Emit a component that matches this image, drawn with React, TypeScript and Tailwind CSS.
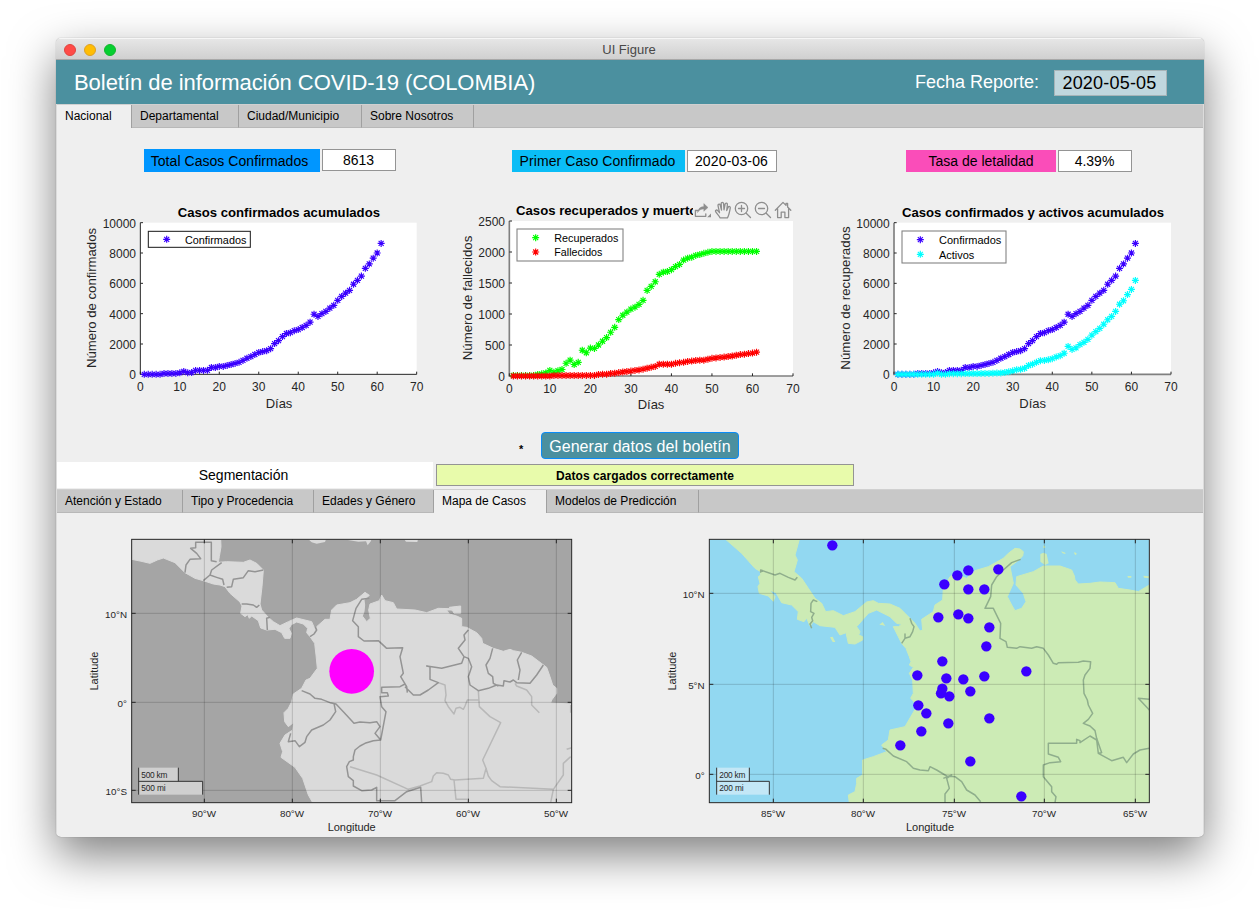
import React from "react";

type Series = { name: string; color: string; values: number[] };

const confirmed = [
  0, 0, 0, 0, 0, 55, 55, 55, 60, 100, 190, 110, 115, 260, 260, 260, 265, 450, 450, 520, 520, 590, 650, 720, 790, 920,
  1060, 1170, 1310, 1440, 1500, 1560, 1690, 2030, 2220, 2490, 2690, 2750, 2880, 2950, 3090, 3230, 3440, 3960, 3820,
  4000, 4150, 4360, 4550, 4880, 5140, 5350, 5540, 5940, 6200, 6480, 6990, 7280, 7660, 8000, 8630,
];
const active = [
  0, 0, 0, 0, 0, 0, 0, 0, 0, 0, 80, 0, 0, 45, 45, 45, 45, 50, 50, 50, 50, 55, 60, 60, 75, 85, 90, 120, 170, 230, 310,
  330, 400, 580, 670, 790, 900, 920, 960, 1030, 1150, 1230, 1390, 1840, 1640, 1750, 1960, 2110, 2310, 2580, 2820, 3030,
  3300, 3600, 3820, 4150, 4620, 4850, 5260, 5600, 6190,
];
const recovered = [
  8, 8, 8, 8, 8, 10, 25, 35, 50, 90, 60, 85, 105, 205, 255, 185, 220, 415, 375, 450, 445, 500, 560, 620, 705, 785, 910,
  980, 1030, 1080, 1110, 1155, 1220, 1380, 1445, 1520, 1640, 1675, 1685, 1715, 1765, 1800, 1870, 1900, 1915, 1945, 1960,
  1978, 1995, 2010, 2010, 2010, 2010, 2010, 2010, 2010, 2010, 2010, 2010, 2010, 2010,
];
const deaths = [
  0, 0, 0, 0, 0, 0, 0, 0, 0, 0, 8, 8, 8, 8, 8, 8, 8, 10, 10, 10, 10, 25, 28, 30, 40, 45, 55, 65, 72, 80, 90, 98, 110,
  125, 140, 155, 190, 190, 190, 190, 205, 215, 220, 235, 240, 250, 255, 255, 270, 285, 292, 300, 305, 315, 322, 335,
  345, 352, 362, 370, 385,
];

const FONT = "'Liberation Sans', Arial, Helvetica, sans-serif";

function Star({ x, y, color }: { x: number; y: number; color: string }) {
  return (
    <path
      d={`M${x - 10.5} ${y}h21M${x} ${y - 10.5}v21M${x - 7.5} ${y - 7.5}l15 15M${x - 7.5} ${y + 7.5}l15 -15`}
      stroke={color}
      strokeWidth="3.5"
      fill="none"
    />
  );
}

type ChartProps = {
  title: string;
  titleX: number;
  titleY: number;
  titleW: number;
  yLabel: string;
  yLabelX: number;
  yLabelMid: number;
  yLabelW: number;
  xLabelX: number;
  xLabelY: number;
  left: number;
  right: number;
  top: number;
  bottom: number;
  max: number;
  step: number;
  axis: string;
  series: Series[];
  legend: { x: number; y: number; w: number; h: number; mark: number; text: number; rows: number[]; widths: number[] };
};

function Chart(p: ChartProps) {
  const px = (d: number) => p.left + ((p.right - p.left) * d) / 70;
  const py = (v: number) => p.bottom - ((p.bottom - p.top) * v) / p.max;
  const yTicks: number[] = [];
  for (let v = 0; v <= p.max; v += p.step) yTicks.push(v);
  return (
    <svg className="h-[220px] w-[360px] shrink-0" viewBox="0 0 1080 660" fontFamily={FONT}>
      <rect x={p.left} y={p.top} width={p.right - p.left} height={p.bottom - p.top} fill="#fff" />
      <path
        d={`M${p.left} ${p.top}V${p.bottom}H${p.right}`}
        stroke={p.axis}
        strokeWidth={p.axis === "#262626" ? 3 : 5}
        fill="none"
      />
      {yTicks.map((v) => (
        <g key={v}>
          <path d={`M${p.left} ${py(v)}h8`} stroke="#262626" strokeWidth="3" />
          <text x={p.left - 13} y={py(v) + 15} fontSize="36" fill="#262626" textAnchor="end">
            {v}
          </text>
        </g>
      ))}
      {[0, 10, 20, 30, 40, 50, 60, 70].map((d) => (
        <g key={d}>
          <path d={`M${px(d)} ${p.bottom}v-8`} stroke="#262626" strokeWidth="3" />
          <text x={px(d)} y={p.bottom + 50} fontSize="36" fill="#262626" textAnchor="middle">
            {d}
          </text>
        </g>
      ))}
      {p.series.map((s) => s.values.map((v, i) => <Star key={s.name + i} x={px(i + 1)} y={py(v)} color={s.color} />))}
      <text x={p.titleX} y={p.titleY} fontSize="39" fontWeight="700" fill="#000" textLength={p.titleW} lengthAdjust="spacingAndGlyphs">
        {p.title}
      </text>
      <text
        transform={`translate(${p.yLabelX} ${p.yLabelMid}) rotate(-90)`}
        fontSize="39"
        fill="#262626"
        textAnchor="middle"
        textLength={p.yLabelW}
        lengthAdjust="spacingAndGlyphs"
      >
        {p.yLabel}
      </text>
      <text x={p.xLabelX} y={p.xLabelY} fontSize="39" fill="#262626" textAnchor="middle">
        Días
      </text>
      <rect x={p.legend.x} y={p.legend.y} width={p.legend.w} height={p.legend.h} fill="#fff" stroke={p.axis} strokeWidth="3.2" />
      {p.series.map((s, i) => (
        <g key={s.name}>
          <Star x={p.legend.mark} y={p.legend.rows[i]} color={s.color} />
          <text
            x={p.legend.text}
            y={p.legend.rows[i] + 13}
            fontSize="33"
            fill="#000"
            textLength={p.legend.widths[i]}
            lengthAdjust="spacingAndGlyphs"
          >
            {s.name}
          </text>
        </g>
      ))}
    </svg>
  );
}

function AxesToolbar() {
  return (
    <svg
      className="absolute left-[238px] top-[5px] h-[20px] w-[100px] bg-[#efefef]"
      viewBox="0 0 100 20"
      fill="none"
      stroke="#8e8e8e"
      strokeWidth="1.3"
      strokeLinejoin="round"
      strokeLinecap="round"
    >
      <path d="M5 10.500H2.400v5.800h10.400v-2.500" />
      <path d="M4.600 12.300c.5-3.600 2.600-5.600 6.200-5.800V3.600l4.200 3.900-4.200 3.800V8.900C8.200 8.900 6.200 9.800 4.600 12.300z" fill="#8e8e8e" strokeWidth=".4" />
      <path d="M18 13.400v3.800h-3.800z" fill="#8e8e8e" stroke="none" />
      <path d="M27 17.800c-.7-2-4-5-4.500-6.500-.3-1.200 1.300-1.800 2.200-.7l1.800 2.100-1.500-7.100c-.2-1.600 1.800-1.900 2.200-.4l1.300 4.800-.3-6.400c0-1.700 2.200-1.700 2.400 0l.4 6.200 1.100-5.600c.3-1.600 2.400-1.300 2.300.3l-.7 6.100 1.500-3.300c.5-1.400 2.400-.9 2.100.6-.7 3.300-1.200 7.400-2.900 9.900z" />
      <circle cx="48.500" cy="8.500" r="6.200" />
      <path d="M53.200 13.200l4.300 4.300M45.500 8.500h6M48.500 5.500v6" />
      <circle cx="68.500" cy="8.500" r="6.200" />
      <path d="M73.200 13.200l4.300 4.300M65.500 8.500h6" />
      <path d="M82.300 10.300L90 2.400l3 3V3.500h1.600V7l3.200 3.300M84.600 9v8.600h3.600v-5.400h3.700v5.400h3.700V9" />
    </svg>
  );
}

type MapProps = {
  className: string;
  width: number;
  frame: [number, number];
  sea: string;
  land: string;
  border: string;
  coast: string;
  islands: string;
  borders: string;
  minor: string;
  xs: [number, string][];
  ys: [number, string][];
  labelX: number;
  xLabelX: number;
  scale: { x: number; km: number; mi: number; kmText: string; miText: string; fill: string };
  children: React.ReactNode;
};

function GeoMap(m: MapProps) {
  const [x0, x1] = m.frame;
  const top = 28;
  const bottom = 818;
  return (
    <svg className={m.className} viewBox={`0 0 ${m.width} 921`} fontFamily={FONT}>
      <svg x={x0} y={top} width={x1 - x0} height={bottom - top} viewBox={`${x0} ${top} ${x1 - x0} ${bottom - top}`}>
        <rect x={x0} y={top} width={x1 - x0} height={bottom - top} fill={m.sea} />
        <path d={m.coast} fill={m.land} stroke={m.land} strokeWidth="3" strokeLinejoin="round" />
        <path d={m.islands} fill={m.land} />
        <path d={m.minor} fill="none" stroke="#b8b8b8" strokeWidth="4.5" strokeLinejoin="round" />
        <path d={m.borders} fill="none" stroke={m.border} strokeWidth="4.5" strokeLinejoin="round" />
        {m.xs.map(([x]) => (
          <path key={x} d={`M${x} ${top}V${bottom}`} stroke="#000" strokeOpacity=".17" strokeWidth="3" />
        ))}
        {m.ys.map(([y]) => (
          <path key={y} d={`M${x0} ${y}H${x1}`} stroke="#000" strokeOpacity=".17" strokeWidth="3" />
        ))}
        {m.children}
      </svg>
      {m.xs.map(([x, t]) => (
        <g key={t}>
          <path d={`M${x} ${top}v12M${x} ${bottom}v-12`} stroke="#262626" strokeWidth="3" />
          <text x={x - 1} y="861" fontSize="29.500" fill="#262626" textAnchor="middle">
            {t}
          </text>
        </g>
      ))}
      {m.ys.map(([y, t]) => (
        <g key={t}>
          <path d={`M${x0} ${y}h12M${x1} ${y}h-12`} stroke="#262626" strokeWidth="3" />
          <text x={x0 - 14} y={y + 13} fontSize="29.500" fill="#262626" textAnchor="end">
            {t}
          </text>
        </g>
      ))}
      <rect x={x0} y={top} width={x1 - x0} height={bottom - top} fill="none" stroke="#262626" strokeWidth="3" />
      <text transform={`translate(${m.labelX} 423) rotate(-90)`} fontSize="33" fill="#262626" textAnchor="middle" textLength="117">
        Latitude
      </text>
      <text x={m.xLabelX} y="903" fontSize="33" fill="#262626" textAnchor="middle" textLength="144">
        Longitude
      </text>
      <rect x={m.scale.x} y="713" width={m.scale.km} height="41" fill={m.scale.fill} />
      <rect x={m.scale.x} y="754" width={m.scale.mi} height="40" fill={m.scale.fill} />
      <path
        d={`M${m.scale.x} 713V794M${m.scale.x + m.scale.km} 713V754M${m.scale.x} 754h${m.scale.mi}V794`}
        fill="none"
        stroke="#333"
        strokeWidth="3"
      />
      <text x={m.scale.x + 8} y="745" fontSize="25" fill="#262626" textLength="78">
        {m.scale.kmText}
      </text>
      <text x={m.scale.x + 8} y="784" fontSize="25" fill="#262626" textLength="73">
        {m.scale.miText}
      </text>
    </svg>
  );
}

const southCoast =
  "M155 28L155 88L180 93L210 100L232 90L250 84L285 98L315 128L345 145L370 152L400 162L420 165L435 170L450 190L480 216L486 228L482 250L495 260L503 254L508 265L515 258L535 272L542 294L560 300L585 298L605 308L614 325L630 325L634 310L627 296L634 284L650 276L670 282L683 295L680 308L690 320L704 340L708 375L712 415L690 445L678 450L665 475L640 492L635 515L625 535L612 548L614 575L625 590L640 578L638 600L615 615L600 640L608 665L603 682L645 712L668 745L685 795L698 818L1475 818L1475 522L1412 519L1415 510L1430 490L1430 475L1418 465L1410 440L1400 412L1384 400L1355 378L1325 367L1300 362L1290 358L1270 364L1240 355L1208 340L1205 325L1190 308L1160 292L1145 290L1145 265L1130 258L1108 252L1100 240L1118 240L1108 232L1142 228L1142 250L1122 250L1118 242L1110 236L1075 235L1040 248L1005 240L950 237L940 218L915 212L905 195L898 212L870 222L866 240L871 265L860 275L847 258L852 245L854 225L852 210L868 196L855 187L830 208L810 218L770 225L755 240L750 268L735 268L710 290L708 305L695 275L650 264L625 275L600 287L580 275L565 262L545 240L540 222L546 170L550 120L530 100L510 90L490 97L440 95L415 97L418 80L423 50L422 28Z";
const southBorders =
  "M315 128L318 105L330 88L362 86L350 70L332 55L347 53L347 37L394 37L394 92L410 95M425 98L395 120L390 135L370 152M390 135L410 142L428 148L432 165M440 172L455 170L460 148L490 143L505 122L525 125L550 120M485 222L500 222L520 225L530 232L538 225M570 262L560 265L562 300M706 290L710 300L702 312L690 320M665 482L690 492L705 505L725 508L750 518L768 522L790 545L822 580L840 576L870 578L890 575L900 590L885 610L902 630L880 632L855 640L840 648L825 660L820 680L820 690L808 695L800 710L805 740L820 752L820 768L845 782L875 780L890 772L890 812L945 812L980 785L1022 772L1025 818M762 520L767 545L750 570L730 585L695 600L680 620L675 637L658 650L645 632L625 635L632 610M868 205L845 208L828 235L818 272L835 290L835 320L852 333L895 332L920 355L968 353L960 380L970 430L962 440L980 470L982 488M902 630L918 545L905 530L900 500L925 498L922 488L905 488L905 472L960 470L975 462M975 470L1000 495L1020 495L1045 480L1075 458L1050 448L1050 410L1040 408L1085 415L1145 400L1152 380M1165 300L1152 315L1155 330L1135 355L1152 380L1165 385L1175 410L1165 440L1170 465L1195 482L1225 475L1250 465L1270 468L1272 452L1290 456L1300 450L1310 458L1350 460L1370 435L1390 405M1238 355L1230 385L1218 405L1225 430L1238 440L1240 460L1255 468M1325 367L1312 390L1320 420L1315 450";
const southMinor =
  "M1075 458L1095 465L1098 495L1095 512L1105 530L1122 552L1128 535L1140 532L1150 538L1155 528L1162 510L1195 510M1195 482L1198 530L1230 560L1262 578L1208 690L1218 715L1210 745L1125 750L1112 748L1105 735L1090 730L1070 728L1060 738L1055 755L1020 768L985 778L890 735L810 710M1218 715L1225 738L1235 752L1260 770L1420 778L1450 735L1450 700L1472 680M1420 778L1412 818M1122 750L1128 808L1162 808M1305 460L1310 468L1340 480L1355 500L1355 525L1378 548M1460 658L1475 653M1472 525L1472 548";
const southIslands =
  "M685 28L695 37L710 41L735 36L738 28ZM790 28L835 35L858 34L863 46L873 33L874 28ZM973 28L978 35L1012 36L1014 28Z";

const northCoast =
  "M197 28L245 70L285 115L302 125L302 135L295 140L300 160L294 170L298 190L325 198L340 214L345 200L328 180L348 188L365 218L395 225L415 245L412 268L432 275L440 264L450 288L460 275L480 287L525 292L540 315L558 308L565 340L585 342L608 330L608 320L596 315L600 305L590 290L625 250L650 240L690 260L710 280L726 283L715 290L700 290L715 320L725 340L738 355L748 380L753 395L748 405L760 412L748 430L758 450L760 490L752 505L762 515L767 535L735 590L690 600L685 630L665 645L680 665L640 680L608 690L608 735L590 745L590 760L585 785L565 795L568 818L1468 818L1468 165L1435 185L1410 180L1375 175L1365 158L1320 156L1290 160L1255 162L1245 150L1243 138L1235 120L1200 108L1150 108L1120 125L1070 140L1068 165L1090 190L1098 215L1085 235L1065 242L1055 225L1042 200L1060 160L1055 135L1050 110L1070 95L1088 78L1090 65L1080 57L1065 55L1045 70L1030 85L985 110L945 122L920 145L905 140L895 125L870 140L850 175L848 210L825 225L820 245L785 268L788 300L780 303L765 280L735 250L720 235L690 222L655 220L640 212L620 216L585 245L550 257L520 242L497 245L485 220L465 205L445 175L425 145L402 125L412 90L405 75L418 28Z";
const northBorders =
  "M302 128L302 120L345 135L360 130L385 142L405 150L412 142M472 215L460 210L453 220L452 245L462 250L455 262L458 272L450 282L455 295M750 265L755 280L762 290L758 305L750 320L735 325L735 312L735 325L725 340M668 655L678 658L700 678L740 695L760 715L780 720L805 722L810 710L830 720L860 738L885 740L905 755L920 780L945 795L962 815M850 745L875 735L860 745L868 775L855 792L855 818M1082 88L1055 98L1030 120L1010 140L995 165L992 200L975 235L1000 235L1022 280L1020 325L1038 335L1042 352L1070 355L1080 350L1115 355L1130 350L1150 355L1165 375L1180 400L1190 403L1195 398L1255 397L1270 393L1292 395L1290 415L1275 435L1270 450L1272 490L1282 510L1285 525L1298 550L1285 568L1270 580L1290 588L1305 602L1310 625L1325 668L1315 670L1310 630L1290 618L1260 638L1260 632L1250 628L1250 640L1165 640L1165 672L1195 682L1202 695L1170 698L1150 705L1150 740L1175 770L1175 785L1188 800L1185 818M1315 670L1355 692L1390 682L1400 698L1420 672L1440 660L1468 655M1468 508L1435 505L1468 540";
const northIslands =
  "M510 322L518 320L526 336L518 336ZM658 284L668 276L676 288L668 286ZM1141 72L1150 68L1160 72L1166 100L1155 105L1141 95ZM1203 64L1216 68L1216 72L1208 70ZM1243 66L1250 70L1248 76L1243 72ZM1402 138L1414 138L1414 143L1404 143ZM1450 137L1468 139L1468 145L1452 143ZM1150 46L1157 50L1155 54L1150 54Z";

const cases = [
  [517, 46], [853, 163], [892, 136], [925, 121], [1015, 118], [925, 178], [973, 178], [835, 262], [895, 253],
  [925, 265], [988, 292], [979, 349], [847, 394], [772, 436], [859, 445], [910, 448], [973, 439], [1099, 424],
  [847, 476], [843, 490], [868, 499], [931, 484], [775, 526], [799, 550], [865, 580], [988, 565], [784, 604],
  [721, 646], [931, 694], [1084, 799],
];

type Tab = { label: string; width: string };

function TabStrip({ tabs, active: current }: { tabs: Tab[]; active: number }) {
  return (
    <div className="flex h-6 shrink-0 border-t border-t-[#d0d0d0] bg-[#c8c8c8] text-[12px] text-black">
      {tabs.map((t, i) => (
        <div
          key={t.label}
          className={`${t.width} shrink-0 whitespace-nowrap border-r border-r-[#a0a0a0] pl-2 leading-[22px] ${
            i === current ? "bg-[#efefef]" : "border-b border-b-[#b8b8b8]"
          }`}
        >
          {t.label}
        </div>
      ))}
      <div className="grow border-b border-b-[#b8b8b8]" />
    </div>
  );
}

function Kpi({ label, value, box, field }: { label: string; value: string; box: string; field: string }) {
  return (
    <div className="flex shrink-0 gap-[2px] text-[14px] leading-[22px]">
      <div className={`${box} whitespace-nowrap text-center`}>{label}</div>
      <div className={`${field} flex h-[22px] items-center justify-center border border-[#949494] bg-white pr-px`}>{value}</div>
    </div>
  );
}

export default function App() {
  return (
    <div className="flex h-[911px] w-[1260px] items-start overflow-hidden bg-white pl-14 pt-[38px] font-['Liberation_Sans',Arial,sans-serif] text-black">
      <div className="flex h-[799px] w-[1148px] flex-col overflow-hidden rounded-[5px] bg-[#efefef] shadow-[0_0_1px_rgba(0,0,0,0.45),0_18px_46px_rgba(0,0,0,0.5)]">
        <div className="grid h-[22px] shrink-0 grid-cols-3 items-center border-b border-t border-b-[#a8a8a8] border-t-[#f6f6f6] bg-linear-to-b from-[#e6e6e6] to-[#d0d0d0] px-2">
          <div className="flex gap-2">
            <span className="size-3 rounded-full border border-[#e0443e] bg-[#ff4b47]" />
            <span className="size-3 rounded-full border border-[#dfa023] bg-[#ffbd03]" />
            <span className="size-3 rounded-full border border-[#12b52c] bg-[#06cf30]" />
          </div>
          <div className="pr-[2px] pt-px text-center text-[13px] leading-5 text-[#484848]">UI Figure</div>
        </div>

        <header className="flex h-11 shrink-0 items-center bg-[#4b909f] pl-[18px] pr-[37px]">
          <h1 className="grow whitespace-nowrap text-[22px] tracking-[-0.05px] text-white">
            Boletín de información COVID-19 (COLOMBIA)
          </h1>
          <span className="mr-[15px] text-[18px] text-white">Fecha Reporte:</span>
          <span className="mt-[2px] flex h-[26px] w-[113px] items-center justify-center border border-[#a6b4b8] bg-[#c0d7de] pr-[2px] text-[18px] tracking-[0.2px]">
            2020-05-05
          </span>
        </header>

        <div className="flex grow flex-col border-x border-[#dcdcdc]">
          <TabStrip
            active={0}
            tabs={[
              { label: "Nacional", width: "w-[75px]" },
              { label: "Departamental", width: "w-[107px]" },
              { label: "Ciudad/Municipio", width: "w-[123px]" },
              { label: "Sobre Nosotros", width: "w-[112px]" },
            ]}
          />

          <section className="flex h-[67px] shrink-0 items-start pl-[87px] pt-[22px]">
            <div className="-mt-px mr-[116px]">
              <Kpi label="Total Casos Confirmados" value="8613" box="h-[23px] w-[176px] bg-[#0096ff] leading-6 pr-[5px] tracking-[0.05px]" field="w-[74px]" />
            </div>
            <div className="mr-[129px]">
              <Kpi label="Primer Caso Confirmado" value="2020-03-06" box="w-[173px] bg-[#0abdf6] pr-[2px] tracking-[0.08px]" field="w-[90px] tracking-[0.15px]" />
            </div>
            <Kpi label="Tasa de letalidad" value="4.39%" box="w-[150px] bg-[#fa4db9]" field="w-[74px]" />
          </section>

          <section className="flex h-[237px] shrink-0 items-start pl-[18px]">
            <Chart
              title="Casos confirmados acumulados"
              titleX={308}
              titleY={66}
              titleW={607}
              yLabel="Número de confirmados"
              yLabelX={64}
              yLabelMid={309}
              yLabelW={420}
              xLabelX={612}
              xLabelY={640}
              left={196}
              right={1025}
              top={83}
              bottom={538}
              max={10000}
              step={2000}
              axis="#262626"
              series={[{ name: "Confirmados", color: "#3a00ff", values: confirmed }]}
              legend={{ x: 220, y: 109, w: 306, h: 48, mark: 275, text: 330, rows: [133], widths: [184] }}
            />
            <div className="relative ml-5">
              <Chart
                title="Casos recuperados y muertos"
                titleX={183}
                titleY={60}
                titleW={566}
                yLabel="Número de fallecidos"
                yLabelX={51}
                yLabelMid={309}
                yLabelW={374}
                xLabelX={588}
                xLabelY={642}
                left={163}
                right={1014}
                top={78}
                bottom={543}
                max={2500}
                step={500}
                axis="#808080"
                series={[
                  { name: "Recuperados", color: "#00ff00", values: recovered },
                  { name: "Fallecidos", color: "#ff0000", values: deaths },
                ]}
                legend={{ x: 186, y: 102, w: 318, h: 96, mark: 242, text: 298, rows: [128, 171], widths: [192, 144] }}
              />
              <AxesToolbar />
            </div>
            <div className="ml-[15px]">
              <Chart
                title="Casos confirmados y activos acumulados"
                titleX={216}
                titleY={66}
                titleW={786}
                yLabel="Número de recuperados"
                yLabelX={61}
                yLabelMid={309}
                yLabelW={430}
                xLabelX={608}
                xLabelY={640}
                left={192}
                right={1023}
                top={83}
                bottom={538}
                max={10000}
                step={2000}
                axis="#808080"
                series={[
                  { name: "Confirmados", color: "#3a00ff", values: confirmed },
                  { name: "Activos", color: "#00ffff", values: active },
                ]}
                legend={{ x: 216, y: 108, w: 312, h: 96, mark: 271, text: 327, rows: [134, 178], widths: [187, 106] }}
              />
            </div>
          </section>

          <div className="flex h-[30px] shrink-0 items-start pl-[462px]">
            <span className="w-[22px] pt-[9px] text-[11px] font-bold leading-4">*</span>
            <button className="h-[27px] w-[198px] whitespace-nowrap rounded-[4px] border border-[#0a8cf8] bg-[#4b909f] pt-[2px] text-[16px] leading-6 text-white tracking-[0.04px]">
              Generar datos del boletín
            </button>
          </div>

          <div className="flex h-[27px] shrink-0 items-start">
            <div className="mr-[3px] h-[26px] w-[376px] bg-white text-center text-[14px] leading-[27px]">
              <span className="pr-[3px]">Segmentación</span>
            </div>
            <div className="mt-[2px] h-[22px] w-[418px] border border-[#949494] bg-[#e8fbab] text-center text-[12px] font-bold leading-[22px] tracking-[0.07px]">
              Datos cargados correctamente
            </div>
          </div>

          <TabStrip
            active={3}
            tabs={[
              { label: "Atención y Estado", width: "w-[126px]" },
              { label: "Tipo y Procedencia", width: "w-[131px]" },
              { label: "Edades y Género", width: "w-[120px]" },
              { label: "Mapa de Casos", width: "w-[113px]" },
              { label: "Modelos de Predicción", width: "w-[152px]" },
            ]}
          />

          <section className="flex items-start pl-[23px] pt-[17px]">
            <GeoMap
              className="h-[307px] w-[510px] shrink-0"
              width={1530}
              frame={[155, 1475]}
              sea="#a5a5a5"
              land="#dadada"
              border="#949494"
              coast={southCoast}
              islands={southIslands}
              borders={southBorders}
              minor={southMinor}
              xs={[[373, "90°W"], [637, "80°W"], [901, "70°W"], [1165, "60°W"], [1429, "50°W"]]}
              ys={[[250, "10°N"], [517, "0°"], [781, "10°S"]]}
              labelX={54}
              xLabelX={815}
              scale={{ x: 176, km: 119, mi: 192, kmText: "500 km", miText: "500 mi", fill: "#cfcfcf" }}
            >
              <circle cx="815" cy="424" r="67" fill="#ff00ff" />
            </GeoMap>
            <div className="ml-[70px]">
              <GeoMap
                className="h-[307px] w-[500px] shrink-0"
                width={1500}
                frame={[148, 1468]}
                sea="#92d8f1"
                land="#ccebb5"
                border="#8fae8c"
                coast={northCoast}
                islands={northIslands}
                borders={northBorders}
                minor=""
                xs={[[340, "85°W"], [610, "80°W"], [883, "75°W"], [1153, "70°W"], [1426, "65°W"]]}
                ys={[[190, "10°N"], [463, "5°N"], [733, "0°"]]}
                labelX={48}
                xLabelX={810}
                scale={{ x: 170, km: 98, mi: 158, kmText: "200 km", miText: "200 mi", fill: "#c3e7f6" }}
              >
                {cases.map(([x, y]) => (
                  <circle key={`${x}-${y}`} cx={x} cy={y} r="15.500" fill="#3a00ff" />
                ))}
              </GeoMap>
            </div>
          </section>
        </div>
      </div>
    </div>
  );
}
